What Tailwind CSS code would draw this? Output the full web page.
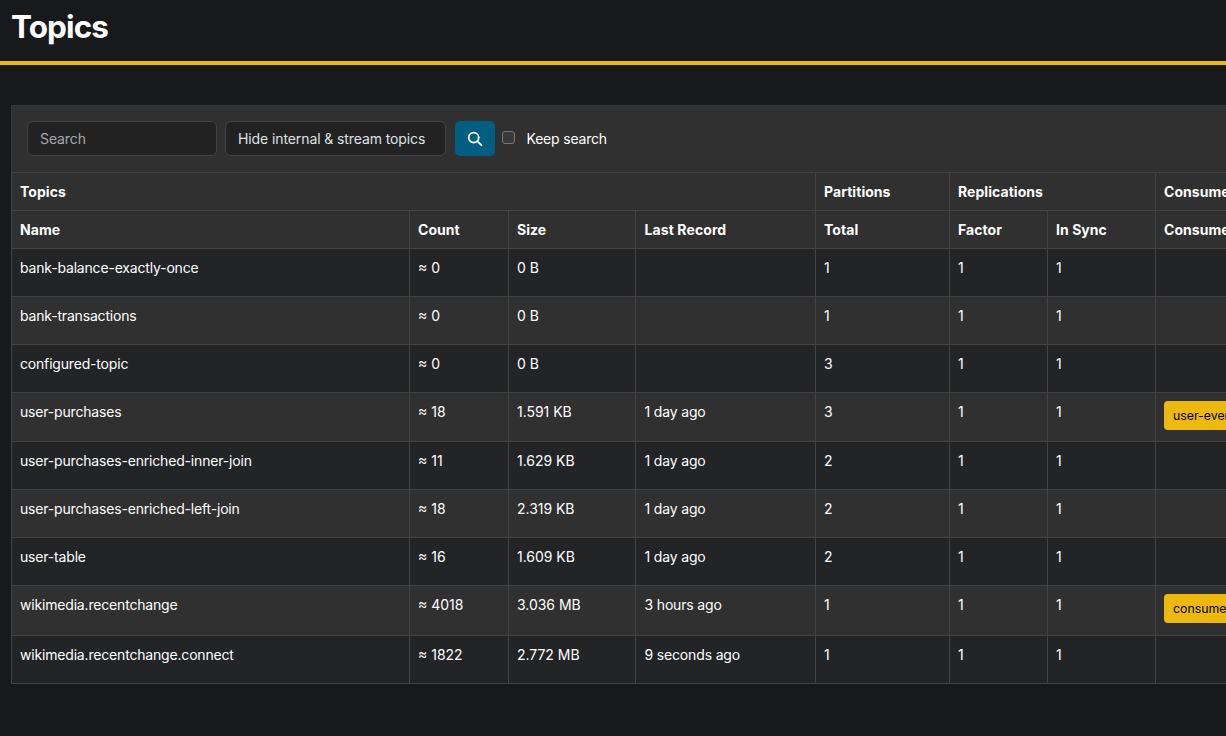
<!DOCTYPE html>
<html lang="en">
<head>
<meta charset="utf-8">
<title>Topics</title>
<script src="https://cdn.jsdelivr.net/npm/@tailwindcss/browser@4"></script>
</head>
<body class="h-[736px] overflow-hidden bg-[#18191a] font-['Inter','Liberation_Sans',sans-serif] text-[14px] leading-[22px] text-white">
<header class="h-[65px] border-b-4 border-[#edb90f] pl-[11px] pt-[7px]">
  <h1 class="text-[31.5px] font-bold leading-[40px] tracking-[-0.9px]"><span>Topics</span></h1>
</header>
<main class="ml-[11px] mt-[40px] w-[1275px]">
  <form class="flex h-[67px] items-start border-l border-t border-[#373737] bg-[#303030] pl-[15px] pt-[15px] tracking-[-0.1px]">
    <div class="flex h-[35px] w-[190px] items-center rounded-md border border-[#434343] bg-[#222222] pl-3 text-[#a4a8ac]"><span>Search</span></div>
    <div class="ml-2 flex h-[35px] w-[221px] items-center rounded-md border border-[#434343] bg-[#222222] pl-3 text-[#dee2e6]"><span>Hide internal &amp; stream topics</span></div>
    <button type="button" class="ml-[8.5px] flex h-[35px] w-10 items-center justify-center rounded-[5px] bg-[#005f81]">
      <svg class="h-4 w-4" viewBox="0 0 16 16" fill="none" stroke="#fff" stroke-width="1.8" stroke-linecap="round"><circle cx="6.7" cy="6.6" r="5"/><path d="M10.4 10.3 14.4 14.2"/></svg>
    </button>
    <span class="ml-[7.5px] mt-[10px] h-[13px] w-[13px] rounded-[3px] border border-[#757575] bg-[#3a3a3a]"></span>
    <span class="ml-[11.5px] mt-[7px] tracking-[-0.2px]">Keep search</span>
  </form>
  <table class="w-[1275px] table-fixed border-collapse bg-[#232426] text-left [&_td]:border [&_td]:border-[#434343] [&_td]:px-2 [&_td]:pb-0 [&_td]:pt-2 [&_td]:align-top [&_td:first-child]:tracking-[-0.18px] [&_td:nth-child(4)]:pl-[8.5px] [&_td:nth-child(4)]:tracking-[-0.16px] [&_td:nth-child(3)]:tracking-[-0.03px] [&_th]:h-[38px] [&_th]:border [&_th]:border-[#434343] [&_th]:px-2 [&_th]:py-0 [&_th]:font-bold [&_th]:tracking-[0.05px]">
    <colgroup><col class="w-[398px]"><col class="w-[99px]"><col class="w-[127px]"><col class="w-[180px]"><col class="w-[134px]"><col class="w-[98px]"><col class="w-[108px]"><col class="w-[131px]"></colgroup>
    <thead class="bg-[#303030]">
      <tr><th colspan="4">Topics</th><th>Partitions</th><th colspan="2">Replications</th><th class="whitespace-nowrap">Consumer Groups</th></tr>
      <tr><th>Name</th><th>Count</th><th>Size</th><th><span class="ml-[0.5px] tracking-[0.1px]">Last Record</span></th><th>Total</th><th>Factor</th><th>In Sync</th><th class="whitespace-nowrap">Consumer Groups</th></tr>
    </thead>
    <tbody>
      <tr class="h-[48px]"><td>bank-balance-exactly-once</td><td>≈ 0</td><td>0 B</td><td></td><td>1</td><td>1</td><td>1</td><td></td></tr>
      <tr class="h-[48px] bg-[#303030]"><td>bank-transactions</td><td>≈ 0</td><td>0 B</td><td></td><td>1</td><td>1</td><td>1</td><td></td></tr>
      <tr class="h-[48px]"><td>configured-topic</td><td>≈ 0</td><td>0 B</td><td></td><td>3</td><td>1</td><td>1</td><td></td></tr>
      <tr class="h-[49px] bg-[#303030]"><td>user-purchases</td><td>≈ 18</td><td>1.591 KB</td><td>1 day ago</td><td>3</td><td>1</td><td>1</td><td><div class="flex h-[29px] items-center whitespace-nowrap rounded-[4px] bg-[#edb90f] pl-[9px] text-[12.3px] text-black"><span>user-events-app</span></div></td></tr>
      <tr class="h-[48px]"><td>user-purchases-enriched-inner-join</td><td>≈ 11</td><td>1.629 KB</td><td>1 day ago</td><td>2</td><td>1</td><td>1</td><td></td></tr>
      <tr class="h-[48px] bg-[#303030]"><td>user-purchases-enriched-left-join</td><td>≈ 18</td><td>2.319 KB</td><td>1 day ago</td><td>2</td><td>1</td><td>1</td><td></td></tr>
      <tr class="h-[48px]"><td>user-table</td><td>≈ 16</td><td>1.609 KB</td><td>1 day ago</td><td>2</td><td>1</td><td>1</td><td></td></tr>
      <tr class="h-[50px] bg-[#303030]"><td>wikimedia.recentchange</td><td>≈ 4018</td><td>3.036 MB</td><td>3 hours ago</td><td>1</td><td>1</td><td>1</td><td><div class="flex h-[29px] items-center whitespace-nowrap rounded-[4px] bg-[#edb90f] pl-[9px] text-[12.3px] text-black"><span>consumer-group</span></div></td></tr>
      <tr class="h-[48px]"><td>wikimedia.recentchange.connect</td><td>≈ 1822</td><td>2.772 MB</td><td>9 seconds ago</td><td>1</td><td>1</td><td>1</td><td></td></tr>
    </tbody>
  </table>
</main>
</body>
</html>
